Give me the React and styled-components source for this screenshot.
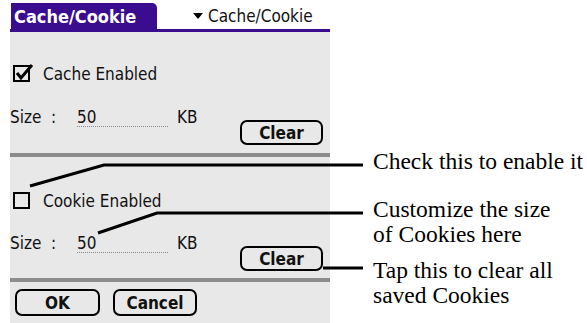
import styled, { createGlobalStyle } from "styled-components";

const GlobalStyle = createGlobalStyle`
  html, body {
    margin: 0;
    padding: 0;
    background: #ffffff;
  }
`;

const PURPLE = "#3a0c8e";
const PALM_FONT = `"DejaVu Sans Condensed", "DejaVu Sans", sans-serif`;

const App = () => {
  return (
    <Page>
      <GlobalStyle />
      <Screen>
        <Header>
          <Tab>Cache/Cookie</Tab>
          <Picker>
            <Triangle />
            Cache/Cookie
          </Picker>
        </Header>

        <Section top={33} bottom={8}>
          <CheckRow>
            <CheckBox checked />
            Cache Enabled
          </CheckRow>
          <SizeRow gap={25}>
            <Field>
              <FieldLabel>Size&nbsp;&nbsp;:</FieldLabel>
              <FieldValue>50</FieldValue>
              <FieldUnit>KB</FieldUnit>
            </Field>
            <ClearButton>Clear</ClearButton>
          </SizeRow>
        </Section>
        <Divider />

        <Section top={35} bottom={7}>
          <CheckRow>
            <CheckBox />
            Cookie Enabled
          </CheckRow>
          <SizeRow gap={24}>
            <Field>
              <FieldLabel>Size&nbsp;&nbsp;:</FieldLabel>
              <FieldValue>50</FieldValue>
              <FieldUnit>KB</FieldUnit>
            </Field>
            <ClearButton>Clear</ClearButton>
          </SizeRow>
        </Section>
        <Divider />

        <Footer>
          <PalmButton width={85}>OK</PalmButton>
          <PalmButton width={84}>Cancel</PalmButton>
        </Footer>
      </Screen>

      <Notes>
        <Note space={149}>Check this to enable it</Note>
        <Note space={23}>
          Customize the size
          <br />
          of Cookies here
        </Note>
        <Note space={11}>
          Tap this to clear all
          <br />
          saved Cookies
        </Note>
      </Notes>

      <Callouts width="587" height="323" viewBox="0 0 587 323">
        <polyline points="30,186 104,165 363,165" />
        <polyline points="98,233 157,213 363,213" />
        <polyline points="323,268 363,268" />
      </Callouts>
    </Page>
  );
};

const CheckBox = ({ checked }) => (
  <BoxIcon width="22" height="18" viewBox="0 0 22 18">
    <rect x="1" y="2" width="15" height="15" fill="none" stroke="#000" strokeWidth="2" />
    {checked && (
      <polyline
        points="4,9 8,14 19,1"
        fill="none"
        stroke="#000"
        strokeWidth="3"
        strokeLinejoin="miter"
      />
    )}
  </BoxIcon>
);

const Page = styled.div`
  position: relative;
  width: 587px;
  height: 323px;
  display: flex;
  overflow: hidden;
  background: #ffffff;
`;

const Screen = styled.div`
  margin-left: 10px;
  width: 320px;
  height: 323px;
  flex-shrink: 0;
  display: flex;
  flex-direction: column;
  background: #e8e8e8;
  font-family: ${PALM_FONT};
  font-size: 17px;
  color: #111;
`;

const Header = styled.div`
  height: 32px;
  box-sizing: border-box;
  display: flex;
  align-items: flex-end;
  background: #ffffff;
  border-bottom: 3px solid ${PURPLE};
`;

const Tab = styled.div`
  margin-left: 1px;
  width: 146px;
  height: 26px;
  box-sizing: border-box;
  padding-left: 3px;
  display: flex;
  align-items: center;
  background: ${PURPLE};
  border-top-right-radius: 5px;
  color: #ffffff;
  font-weight: bold;
  font-size: 18px;
  white-space: nowrap;
`;

const Picker = styled.div`
  margin-left: 36px;
  height: 26px;
  display: flex;
  align-items: center;
  gap: 5px;
  white-space: nowrap;
`;

const Triangle = styled.span`
  width: 0;
  height: 0;
  border-left: 5px solid transparent;
  border-right: 5px solid transparent;
  border-top: 6px solid #000;
`;

const Section = styled.div`
  display: flex;
  flex-direction: column;
  padding: ${(p) => p.top}px 7px ${(p) => p.bottom}px 3px;
`;

const CheckRow = styled.div`
  height: 17px;
  display: flex;
  align-items: center;
  gap: 8px;
  white-space: nowrap;
`;

const BoxIcon = styled.svg`
  display: block;
  margin-top: -1px;
`;

const SizeRow = styled.div`
  margin-top: ${(p) => p.gap}px;
  display: flex;
  justify-content: space-between;
  align-items: flex-start;
`;

const Field = styled.div`
  height: 20px;
  display: flex;
  align-items: center;
  margin-left: -3px;
`;

const FieldLabel = styled.span`
  width: 67px;
  white-space: nowrap;
`;

const FieldValue = styled.span`
  width: 91px;
  height: 20px;
  line-height: 20px;
  box-sizing: border-box;
  border-bottom: 1px dotted #888;
`;

const FieldUnit = styled.span`
  margin-left: 9px;
`;

const PalmButton = styled.div`
  width: ${(p) => p.width}px;
  height: 27px;
  box-sizing: border-box;
  display: flex;
  align-items: center;
  justify-content: center;
  border: 2px solid #000;
  border-radius: 7px;
  font-weight: bold;
  font-size: 17px;
`;

const ClearButton = styled(PalmButton).attrs({ width: 83 })`
  margin-top: 13px;
  height: 25px;
`;

const Divider = styled.div`
  height: 4px;
  background: #8c8c8c;
`;

const Footer = styled.div`
  display: flex;
  gap: 13px;
  padding: 7px 0 0 5px;
`;

const Notes = styled.div`
  margin-left: 43px;
  display: flex;
  flex-direction: column;
  font-family: "Liberation Serif", "Times New Roman", serif;
  font-size: 23.5px;
  line-height: 25px;
  color: #000;
  white-space: nowrap;
`;

const Note = styled.div`
  margin-top: ${(p) => p.space}px;
`;

const Callouts = styled.svg`
  position: absolute;
  left: 0;
  top: 0;
  pointer-events: none;
  polyline {
    fill: none;
    stroke: #000;
    stroke-width: 3;
  }
`;

export default App;
